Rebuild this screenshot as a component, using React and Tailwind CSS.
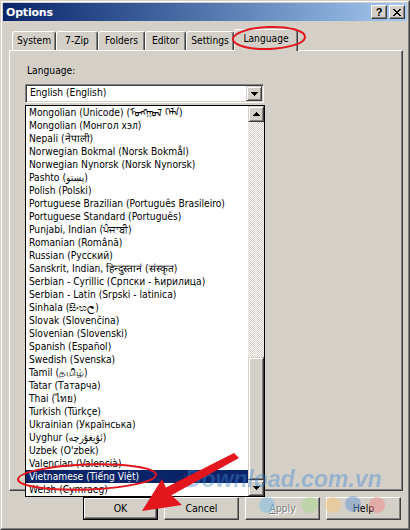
import React from "react";

const items = [
  "Mongolian (Unicode) (ᠮᠣᠩᠭᠣᠯ ᠬᠡᠯᠡ)",
  "Mongolian (Монгол хэл)",
  "Nepali (नेपाली)",
  "Norwegian Bokmal (Norsk Bokmål)",
  "Norwegian Nynorsk (Norsk Nynorsk)",
  "Pashto (پښتو)",
  "Polish (Polski)",
  "Portuguese Brazilian (Português Brasileiro)",
  "Portuguese Standard (Português)",
  "Punjabi, Indian (ਪੰਜਾਬੀ)",
  "Romanian (Română)",
  "Russian (Русский)",
  "Sanskrit, Indian, हिन्दुस्तानं (संस्कृत)",
  "Serbian - Cyrillic (Српски - ћирилица)",
  "Serbian - Latin (Srpski - latinica)",
  "Sinhala (සිංහල)",
  "Slovak (Slovenčina)",
  "Slovenian (Slovenski)",
  "Spanish (Español)",
  "Swedish (Svenska)",
  "Tamil (தமிழ்)",
  "Tatar (Татарча)",
  "Thai (ไทย)",
  "Turkish (Türkçe)",
  "Ukrainian (Українська)",
  "Uyghur (ئۇيغۇرچە)",
  "Uzbek (O'zbek)",
  "Valencian (Valencià)",
  "Vietnamese (Tiếng Việt)",
  "Welsh (Cymraeg)",
];

function TriDown() {
  return (
    <svg width="7" height="4" viewBox="0 0 7 4" shapeRendering="crispEdges">
      <path d="M0 0h7v1H0z M1 1h5v1H1z M2 2h3v1H2z M3 3h1v1H3z" fill="#000" />
    </svg>
  );
}
function TriUp() {
  return (
    <svg width="7" height="4" viewBox="0 0 7 4" shapeRendering="crispEdges">
      <path d="M3 0h1v1H3z M2 1h3v1H2z M1 2h5v1H1z M0 3h7v1H0z" fill="#000" />
    </svg>
  );
}

function Tab({ label, w }) {
  return (
    <div
      className="h-[19px] flex items-center justify-center border-t border-l border-r border-t-white border-l-white border-r-[#404040] rounded-t-[3px] shadow-[inset_-1px_0_#808080] text-[10.2px] leading-none"
      style={{ width: w }}
    >
      {label}
    </div>
  );
}

function Button({ children, def }) {
  return (
    <div
      className={
        def
          ? "w-[75px] h-[23px] border border-black"
          : "w-[75px] h-[23px] border border-t-white border-l-white border-r-[#404040] border-b-[#404040]"
      }
    >
      <div
        className={
          def
            ? "h-full w-full flex items-center justify-center border border-t-white border-l-white border-r-[#404040] border-b-[#404040] shadow-[inset_-1px_-1px_#808080] text-[10.5px]"
            : "h-full w-full flex items-center justify-center shadow-[inset_-1px_-1px_#808080] text-[10.5px]"
        }
      >
        {children}
      </div>
    </div>
  );
}

export default function App() {
  return (
    <div className="relative w-[410px] h-[530px] bg-[#d4d0c8] text-black overflow-hidden font-['DejaVu_Sans_Condensed','Liberation_Sans',sans-serif]">
      <div className="h-full border border-t-[#d4d0c8] border-l-[#d4d0c8] border-r-[#404040] border-b-[#404040]">
        <div className="h-full border border-t-white border-l-white border-r-[#808080] border-b-[#808080] p-px flex flex-col">
          {/* Title bar */}
          <div className="h-[18px] flex items-center justify-between bg-linear-to-r from-[#0a246a] to-[#a6caf0] pl-[3px] pr-[2px]">
            <span className="text-white font-bold text-[11px] leading-none font-['DejaVu_Sans','Liberation_Sans',sans-serif] tracking-[-0.2px]">
              Options
            </span>
            <div className="flex gap-[2px]">
              <div className="w-[16px] h-[14px] border border-t-white border-l-white border-r-[#404040] border-b-[#404040] shadow-[inset_-1px_-1px_#808080] bg-[#d4d0c8] flex items-center justify-center text-[11px] font-bold leading-none font-['Liberation_Sans',sans-serif]">
                ?
              </div>
              <div className="w-[16px] h-[14px] border border-t-white border-l-white border-r-[#404040] border-b-[#404040] shadow-[inset_-1px_-1px_#808080] bg-[#d4d0c8] flex items-center justify-center">
                <svg width="8" height="7" viewBox="0 0 8 7" shapeRendering="crispEdges">
                  <path
                    d="M0 0h2v1H0z M6 0h2v1H6z M1 1h2v1H1z M5 1h2v1H5z M2 2h4v1H2z M3 3h2v1H3z M2 4h4v1H2z M1 5h2v1H1z M5 5h2v1H5z M0 6h2v1H0z M6 6h2v1H6z"
                    fill="#000"
                  />
                </svg>
              </div>
            </div>
          </div>

          {/* Tabs */}
          <div className="mt-[8px] h-[21px] flex items-end pl-[9px]">
            <Tab label="System" w={44} />
            <Tab label="7-Zip" w={42} />
            <Tab label="Folders" w={47} />
            <Tab label="Editor" w={41} />
            <Tab label="Settings" w={48} />
            <div className="relative z-10 -mb-px w-[64px] h-[22px] bg-[#d4d0c8] flex items-center justify-center pb-[2px] border-t border-l border-r border-t-white border-l-white border-r-[#404040] rounded-t-[3px] shadow-[inset_-1px_0_#808080] text-[10.2px] leading-none">
              Language
            </div>
          </div>

          {/* Panel */}
          <div className="relative ml-[6px] w-[394px] h-[441px] border border-t-white border-l-white border-r-[#404040] border-b-[#404040] shadow-[inset_-1px_-1px_#808080] pt-[13px] pl-[15px]">
            <div className="ml-[2px] h-[13px] text-[10.2px] leading-[13px]">Language:</div>
            <div className="mt-[7px] w-[239px] h-[19px] border border-t-[#808080] border-l-[#808080] border-r-white border-b-white bg-white shadow-[inset_1px_1px_#404040,inset_-1px_-1px_#d4d0c8] p-[1px] flex items-center justify-between">
              <span className="pl-[3px] text-[10.2px] leading-none">English (English)</span>
              <div className="w-[16px] h-[15px] border border-t-[#d4d0c8] border-l-[#d4d0c8] border-r-[#404040] border-b-[#404040] bg-[#d4d0c8] shadow-[inset_1px_1px_white,inset_-1px_-1px_#808080] flex items-center justify-center">
                <TriDown />
              </div>
            </div>

            {/* Dropdown list */}
            <div className="absolute left-[15px] top-[54px] w-[240px] h-[392px] border border-black bg-white flex z-10">
              <div className="w-[222px] flex flex-col">
                {items.map((t, i) => (
                  <div
                    key={i}
                    className={
                      i === 28
                        ? "h-[13px] leading-[13px] pl-[3px] whitespace-nowrap overflow-hidden text-[10.2px] bg-[#0a246a] text-white"
                        : "h-[13px] leading-[13px] pl-[3px] whitespace-nowrap overflow-hidden text-[10.2px]"
                    }
                  >
                    {t}
                  </div>
                ))}
              </div>
              <div className="w-[16px] flex flex-col">
                <div className="h-[16px] border border-t-[#d4d0c8] border-l-[#d4d0c8] border-r-[#404040] border-b-[#404040] bg-[#d4d0c8] shadow-[inset_1px_1px_white,inset_-1px_-1px_#808080] flex items-center justify-center">
                  <TriUp />
                </div>
                <div className="h-[235px] bg-[repeating-conic-gradient(#d4d0c8_0_25%,#ffffff_0_50%)] bg-[length:2px_2px]" />
                <div className="h-[123px] border border-t-[#d4d0c8] border-l-[#d4d0c8] border-r-[#404040] border-b-[#404040] bg-[#d4d0c8] shadow-[inset_1px_1px_white,inset_-1px_-1px_#808080]" />
                <div className="h-[16px] border border-t-[#d4d0c8] border-l-[#d4d0c8] border-r-[#404040] border-b-[#404040] bg-[#d4d0c8] shadow-[inset_1px_1px_white,inset_-1px_-1px_#808080] flex items-center justify-center">
                  <TriDown />
                </div>
              </div>
            </div>
          </div>

          {/* Buttons */}
          <div className="mt-[6px] flex justify-end gap-[6px] pr-[6px]">
            <Button def>OK</Button>
            <Button>Cancel</Button>
            <Button>
              <span className="text-[#808080] [text-shadow:1px_1px_#ffffff]">
                <span className="underline">A</span>pply
              </span>
            </Button>
            <Button>Help</Button>
          </div>
        </div>
      </div>

      {/* Watermark */}
      <div className="absolute left-[185px] top-[468px] text-[23px] leading-[23px] font-bold italic text-[#3f86d6] opacity-40 font-['Liberation_Sans',sans-serif] pointer-events-none z-20 whitespace-nowrap">
        Download.com.vn
      </div>

      {/* Annotations */}
      <svg className="absolute left-0 top-0 pointer-events-none z-30" width="410" height="530" viewBox="0 0 410 530">
        <g opacity="0.5">
          <circle cx="267" cy="505" r="8" fill="#7cc0e8" />
          <circle cx="310" cy="505" r="8" fill="#a8d88a" />
          <circle cx="333" cy="505" r="8" fill="#f8c878" />
          <circle cx="353" cy="504" r="8" fill="#6a9ad0" />
          <circle cx="377" cy="505" r="8" fill="#f08a8a" />
        </g>
        <ellipse cx="269" cy="38" rx="36" ry="11" fill="none" stroke="#e2161c" strokeWidth="2" transform="rotate(-2 269 38)" />
        <ellipse cx="87" cy="477" rx="69" ry="12.5" fill="none" stroke="#e2161c" strokeWidth="2" transform="rotate(-2 87 477)" />
        <path d="M234 453 L239 458 L170 496 L163 489 Z" fill="#e2161c" />
        <path d="M142 511 L162 479 L168 492 L182 505 Z" fill="#e2161c" />
      </svg>
    </div>
  );
}
